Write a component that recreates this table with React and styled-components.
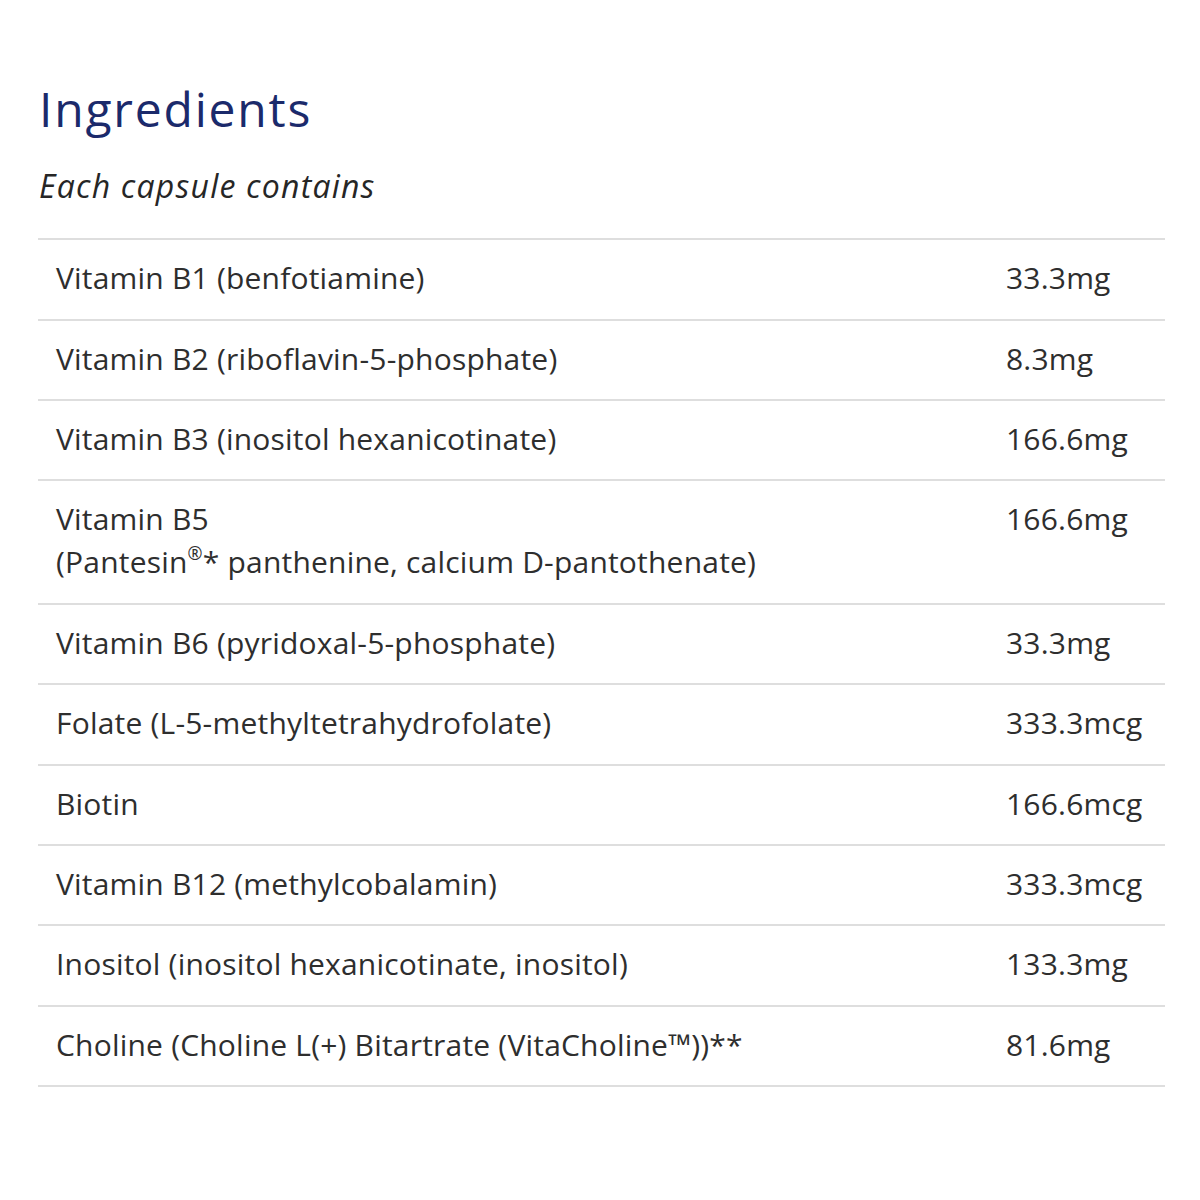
import styled, { createGlobalStyle } from "styled-components"

const rows = [
  { name: "Vitamin B1 (benfotiamine)", amount: "33.3mg" },
  { name: "Vitamin B2 (riboflavin-5-phosphate)", amount: "8.3mg" },
  { name: "Vitamin B3 (inositol hexanicotinate)", amount: "166.6mg" },
  {
    name: (
      <>
        Vitamin B5
        <br />
        (Pantesin<sup>®</sup>* panthenine, calcium D-pantothenate)
      </>
    ),
    amount: "166.6mg",
  },
  { name: "Vitamin B6 (pyridoxal-5-phosphate)", amount: "33.3mg" },
  { name: "Folate (L-5-methyltetrahydrofolate)", amount: "333.3mcg" },
  { name: "Biotin", amount: "166.6mcg" },
  { name: "Vitamin B12 (methylcobalamin)", amount: "333.3mcg" },
  { name: "Inositol (inositol hexanicotinate, inositol)", amount: "133.3mg" },
  { name: "Choline (Choline L(+) Bitartrate (VitaCholine™))**", amount: "81.6mg" },
]

const App = () => (
  <Page>
    <Global />
    <Title>Ingredients</Title>
    <Subtitle>Each capsule contains</Subtitle>
    <Table>
      <tbody>
        {rows.map((r, i) => (
          <Row key={i}>
            <NameCell>{r.name}</NameCell>
            <AmountCell>{r.amount}</AmountCell>
          </Row>
        ))}
      </tbody>
    </Table>
  </Page>
)

export default App

const Global = createGlobalStyle`
  body {
    margin: 0;
    background: #fff;
    font-family: "Open Sans", "Liberation Sans", sans-serif;
    color: #2e2e2e;
  }
`

const Page = styled.div`
  padding: 80px 35px 0 38px;
`

const Title = styled.h1`
  margin: 0 0 0 1px;
  font-size: 48px;
  font-weight: 400;
  line-height: 1.2;
  letter-spacing: 1.8px;
  color: #1b2a6b;
`

const Subtitle = styled.p`
  margin: 27px 0 32px 1px;
  font-size: 32px;
  font-style: italic;
  line-height: 1.3;
  letter-spacing: 1.2px;
  color: #262626;
`

const Table = styled.table`
  width: 100%;
  border-collapse: collapse;
  border-top: 2px solid #dedede;
`

const Row = styled.tr`
  border-bottom: 2px solid #dedede;
`

const NameCell = styled.td`
  padding: 16px 18px 19.4px 18px;
  font-size: 30px;
  line-height: 43px;
  letter-spacing: 0.2px;
  vertical-align: top;
  color: #2e2e2e;
  sup {
    font-size: 60%;
    line-height: 0;
    vertical-align: 0.75em;
  }
`

const AmountCell = styled(NameCell)`
  width: 141px;
`
